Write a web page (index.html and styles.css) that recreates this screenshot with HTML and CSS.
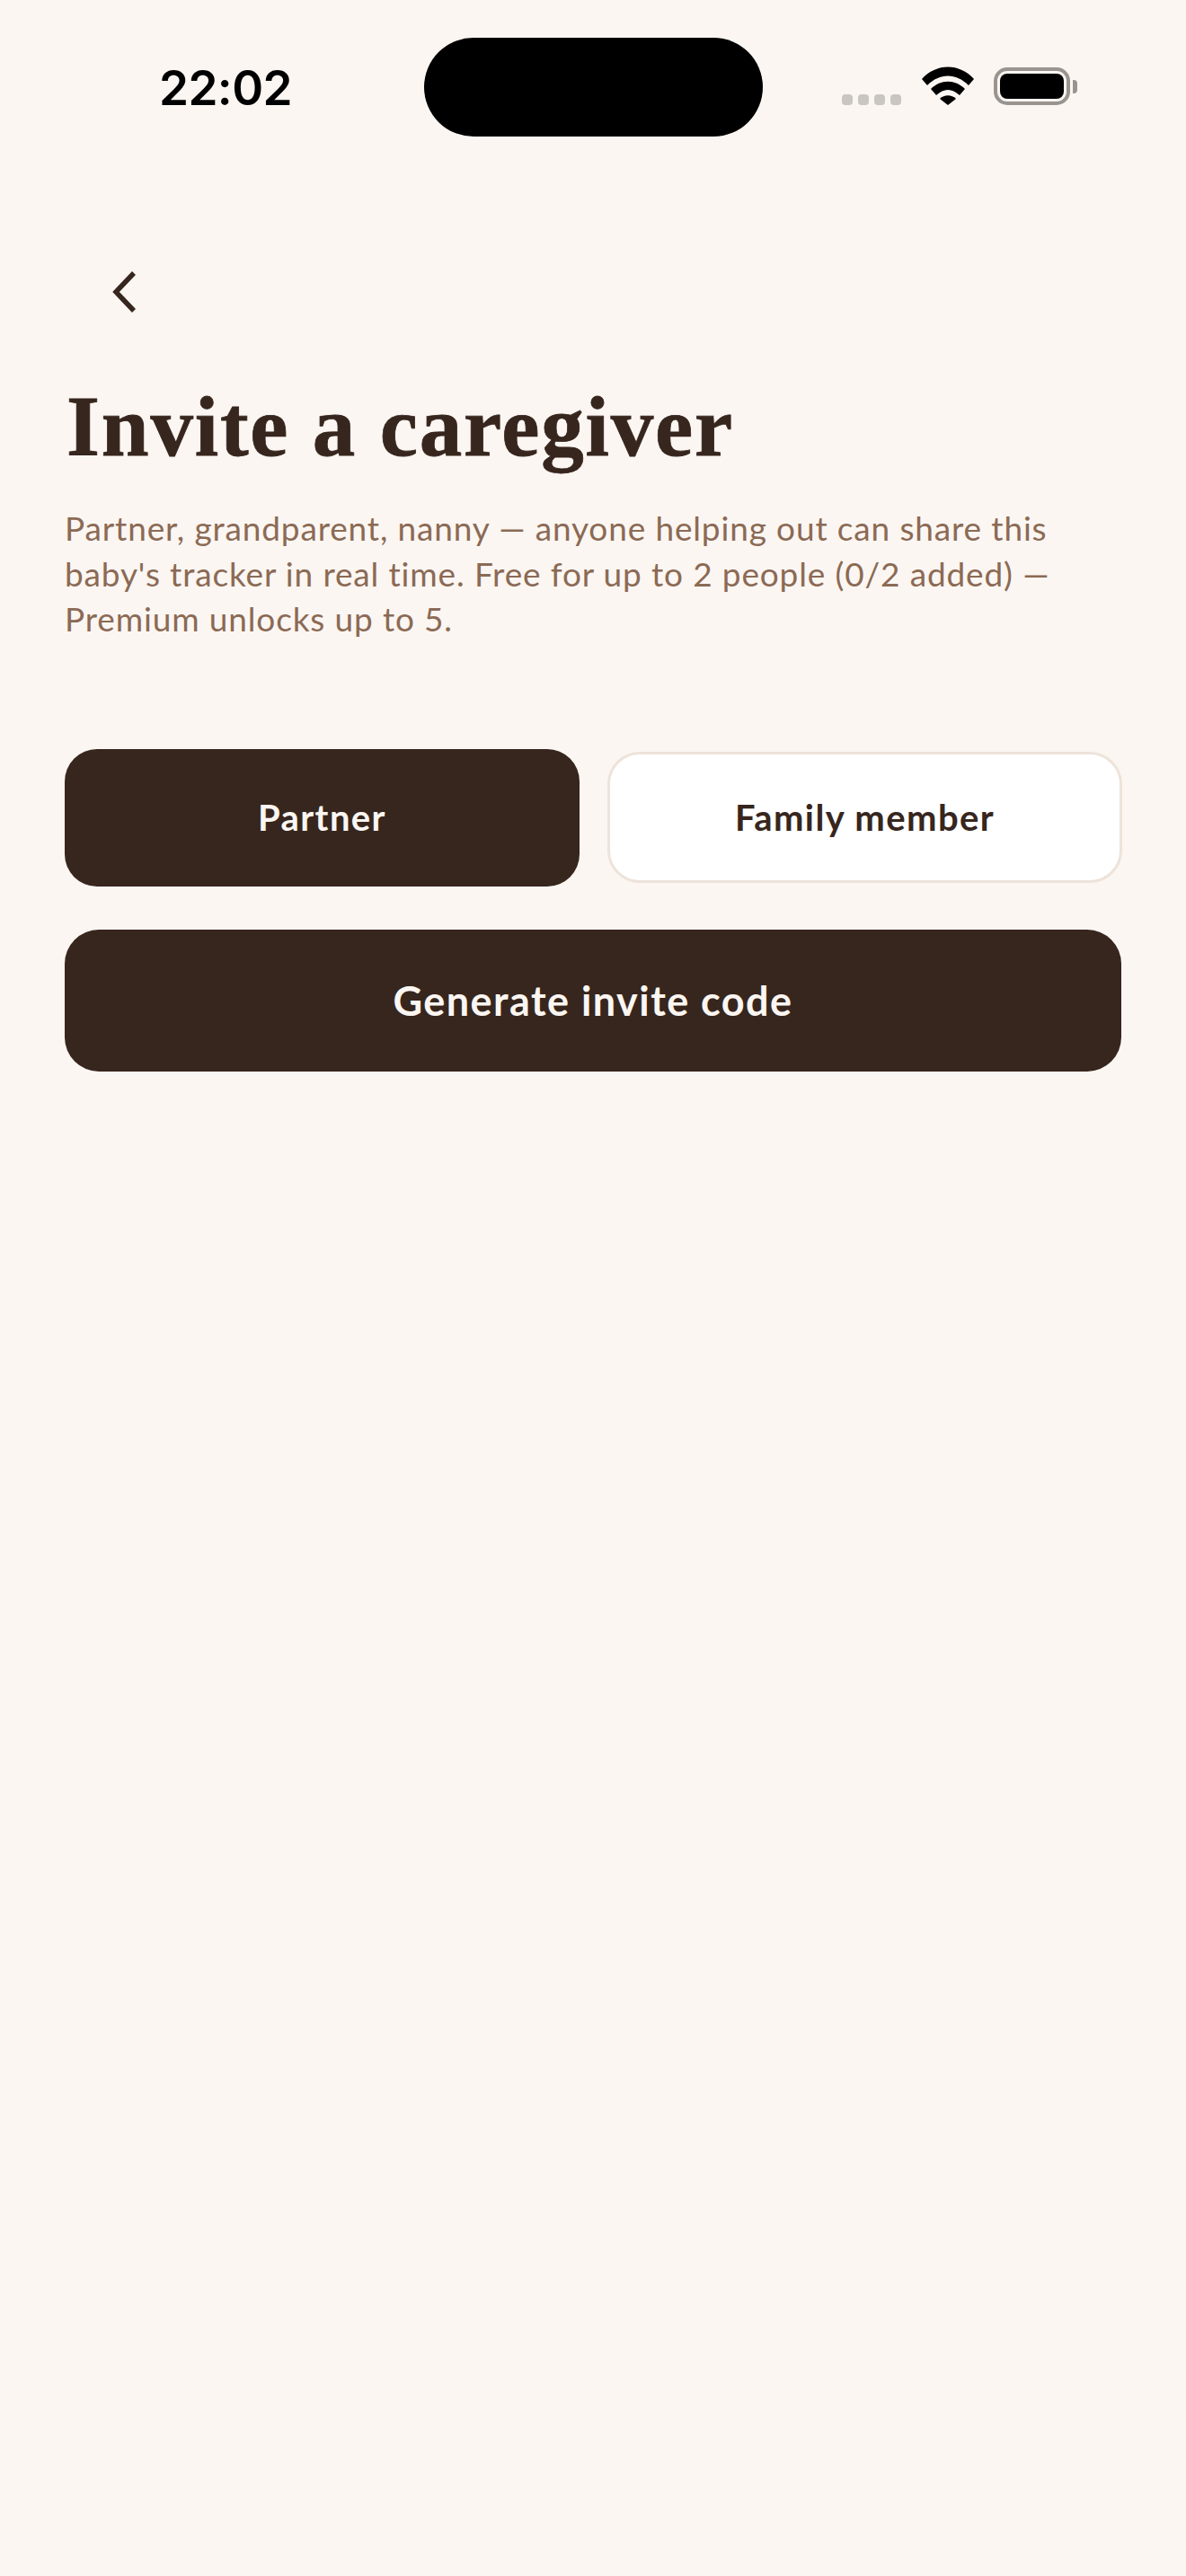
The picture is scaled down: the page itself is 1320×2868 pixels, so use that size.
FILE: index.html
```html
<!DOCTYPE html>
<html lang="en">
  <head>
    <meta charset="UTF-8" />
    <meta name="viewport" content="width=device-width, initial-scale=1.0" />
    <title>Invite a caregiver</title>
    <link rel="stylesheet" href="styles.css">
  </head>
  <body>
    <div class="status-bar">
      <div class="time">22:02</div>
      <div class="island"></div>
      <div class="status-icons">
        <div class="signal">
          <span></span><span></span><span></span><span></span>
        </div>
        <svg class="wifi" width="58" height="43" viewBox="0 0 58 43">
          <path d="M0 14 C16 -4 42 -4 58 14 L52 21 C38 7 20 7 6 21 Z" fill="#000" />
          <path d="M10 25 C21 14 37 14 48 25 L42 32 C33 24 25 24 16 32 Z" fill="#000" />
          <path d="M20 36 C25 31 33 31 38 36 L29 43 Z" fill="#000" />
        </svg>
        <div class="battery">
          <div class="battery-body"><div class="battery-fill"></div></div>
          <div class="battery-nub"></div>
        </div>
      </div>
    </div>

    <main class="content">
      <button class="back-button" aria-label="Back">
        <svg width="28" height="46" viewBox="0 0 28 46">
          <path d="M25 2 L5 23 L25 44" fill="none" stroke="#37261e" stroke-width="5.5" />
        </svg>
      </button>

      <h1>Invite a caregiver</h1>
      <p class="intro">
        Partner, grandparent, nanny — anyone helping out can share this<br>
        baby's tracker in real time. Free for up to 2 people (0/2 added) —<br>
        Premium unlocks up to 5.
      </p>

      <div class="role-row">
        <button class="role role-active">Partner</button>
        <button class="role">Family member</button>
      </div>

      <button class="generate">Generate invite code</button>
    </main>
  </body>
</html>
```

FILE: styles.css
```css
body {
  font-family: Lato, sans-serif;
  margin: 0;
  padding: 0;
  background-color: #fbf6f2;
  color: #37261e;
}
button {
  font-family: Lato, sans-serif;
  cursor: pointer;
}
.status-bar {
  display: flex;
  align-items: flex-start;
  height: 152px;
  padding-top: 42px;
  box-sizing: border-box;
}
.time {
  width: 472px;
  padding: 28px 0 0 177px;
  box-sizing: border-box;
  font-family: Inter, sans-serif;
  font-size: 53px;
  font-weight: 600;
  letter-spacing: -0.6px;
  line-height: 56px;
  color: #000;
}
.island {
  width: 377px;
  height: 110px;
  border-radius: 55px;
  background-color: #000;
}
.status-icons {
  display: flex;
  align-items: flex-end;
  height: 75px;
  margin-left: 88px;
}
.signal {
  display: flex;
  gap: 6px;
  margin-right: 23px;
}
.signal span {
  width: 12px;
  height: 12px;
  border-radius: 4px;
  background-color: #c9c5c1;
}
.wifi {
  margin-right: 22px;
}
.battery {
  display: flex;
  align-items: center;
}
.battery-body {
  width: 85px;
  height: 42px;
  padding: 3px;
  box-sizing: border-box;
  border: 4px solid #9a9490;
  border-radius: 15px;
}
.battery-fill {
  height: 100%;
  border-radius: 8px;
  background-color: #000;
}
.battery-nub {
  width: 5px;
  height: 15px;
  margin-left: 3px;
  border-radius: 0 4px 4px 0;
  background-color: #9a9490;
}
.content {
  padding: 150px 72px 0;
}
.back-button {
  display: block;
  margin: 0 0 72px 52px;
  padding: 0;
  height: 46px;
  border: none;
  background: none;
}
h1 {
  margin: 0 0 33px;
  padding-left: 2px;
  font-family: "Liberation Serif", serif;
  font-size: 95px;
  font-weight: 700;
  letter-spacing: 1.8px;
  line-height: 110px;
  color: #37261e;
  -webkit-text-stroke: 0.8px #37261e;
}
.intro {
  margin: 0 0 119px;
  font-size: 37px;
  letter-spacing: 0.85px;
  line-height: 50.5px;
  color: #8b6a55;
}
.role-row {
  display: grid;
  grid-template-columns: 573px 573px;
  gap: 31px;
  align-items: center;
  margin-bottom: 48px;
}
.role {
  height: 146px;
  padding: 0;
  font-size: 40px;
  font-weight: 700;
  letter-spacing: 1.4px;
  color: #37261e;
  background-color: #fff;
  border: 3px solid #eee3da;
  border-radius: 36px;
}
.role-active {
  height: 153px;
  color: #fbf6f2;
  background-color: #37261e;
  border: none;
}
.generate {
  display: block;
  width: 100%;
  height: 158px;
  padding: 0;
  font-size: 45px;
  font-weight: 700;
  letter-spacing: 1.45px;
  color: #fbf6f2;
  background-color: #37261e;
  border: none;
  border-radius: 38px;
}
```
